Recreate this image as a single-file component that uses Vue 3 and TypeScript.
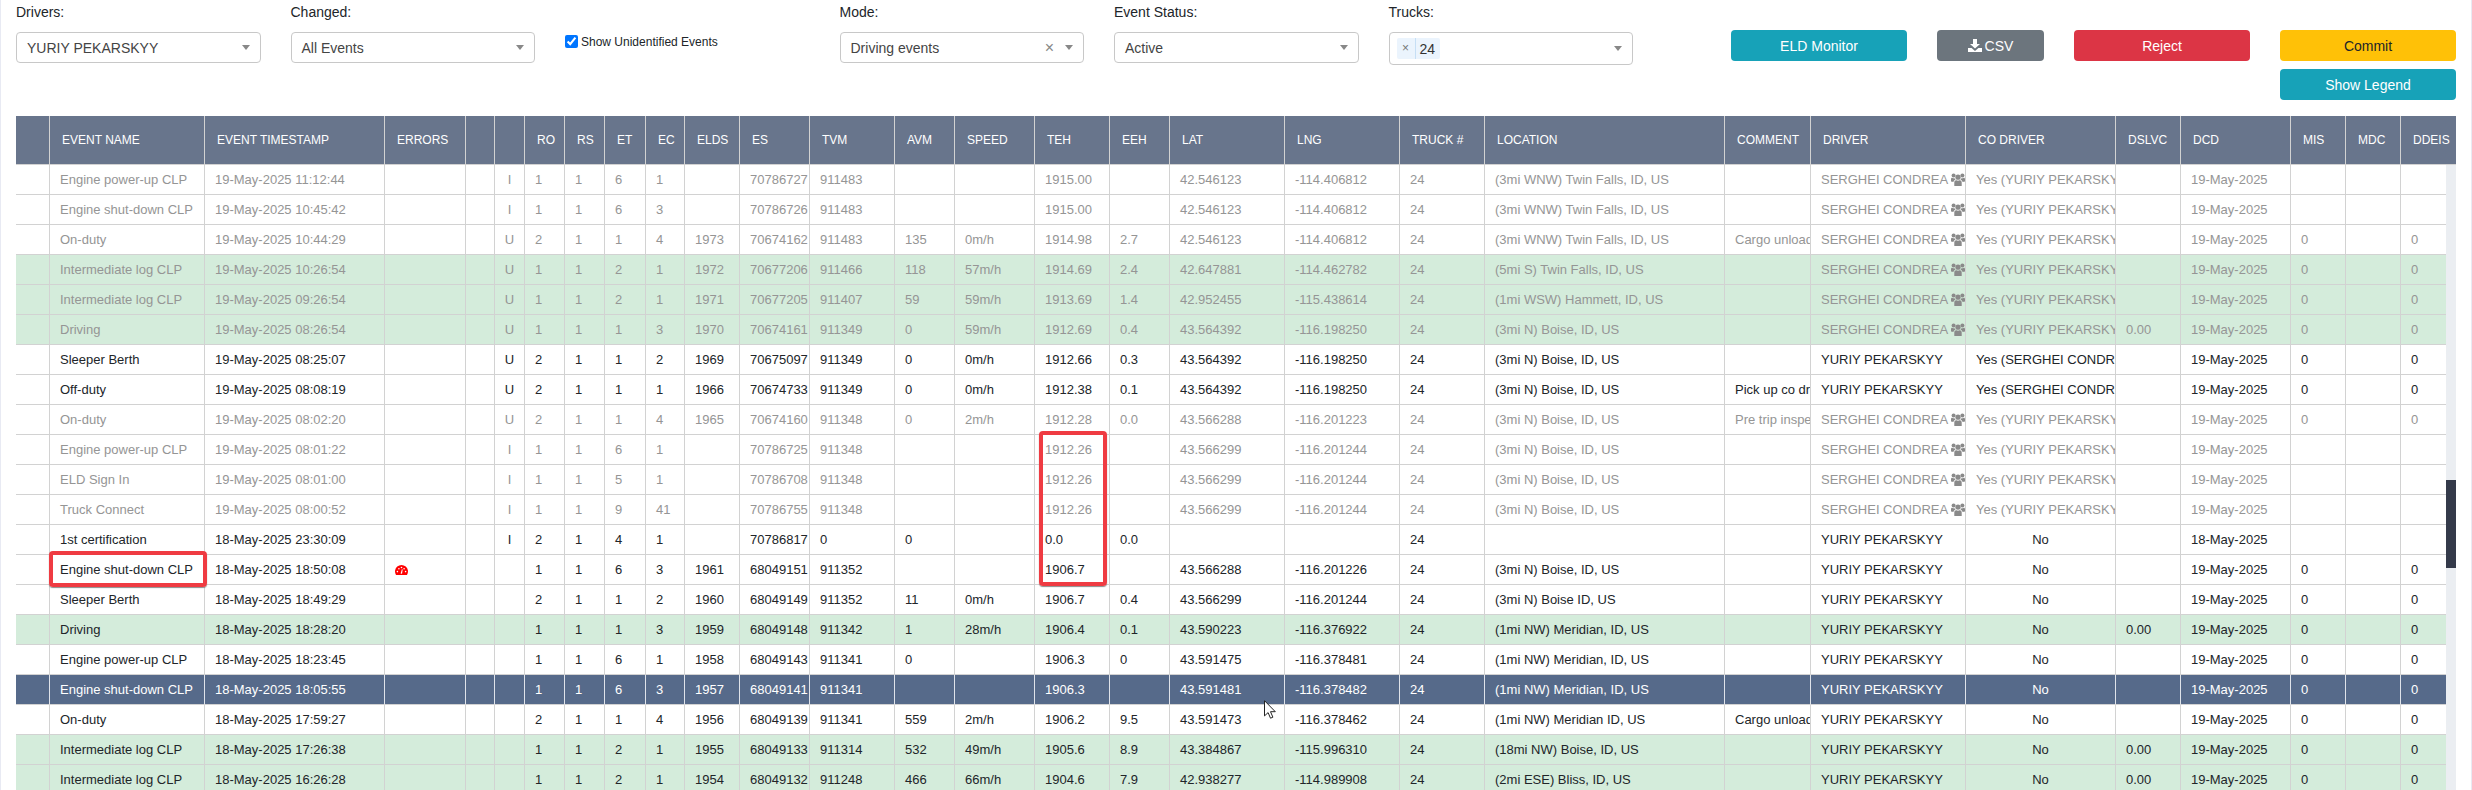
<script setup lang="ts">
interface Row {
  kind: string
  cells: string[]
}

const SERGHEI = 'SERGHEI CONDREA'
const YURIY = 'YURIY PEKARSKYY'
const CO_Y = 'Yes (YURIY PEKARSKYY)'
const CO_S = 'Yes (SERGHEI CONDREA)'
const D19 = '19-May-2025'
const BOISE = '(3mi N) Boise, ID, US'
const TWIN = '(3mi WNW) Twin Falls, ID, US'
const MER = '(1mi NW) Meridian, ID, US'

const bodyWidths: number[] = [34, 155, 180, 81, 29, 30, 40, 40, 41, 39, 55, 70, 85, 60, 80, 75, 60, 115, 115, 85, 240, 86, 155, 150, 65, 110, 55, 55, 45]
const headWidths: number[] = [...bodyWidths.slice(0, -1), 55]

const headers: string[] = ['', 'EVENT NAME', 'EVENT TIMESTAMP', 'ERRORS', '', '', 'RO', 'RS', 'ET', 'EC', 'ELDS', 'ES', 'TVM', 'AVM', 'SPEED', 'TEH', 'EEH', 'LAT', 'LNG', 'TRUCK #', 'LOCATION', 'COMMENT', 'DRIVER', 'CO DRIVER', 'DSLVC', 'DCD', 'MIS', 'MDC', 'DDEIS']

// name|ts|err|blank|iu|ro|rs|et|ec|elds|es|tvm|avm|speed|teh|eeh|lat|lng|truck|loc|comment|driver|co|dslvc|dcd|mis|mdc|ddeis
const raw: [string, string][] = [
  ['gray', `Engine power-up CLP|19-May-2025 11:12:44|||I|1|1|6|1||70786727|911483|||1915.00||42.546123|-114.406812|24|${TWIN}||${SERGHEI}|${CO_Y}||${D19}|||`],
  ['gray', `Engine shut-down CLP|19-May-2025 10:45:42|||I|1|1|6|3||70786726|911483|||1915.00||42.546123|-114.406812|24|${TWIN}||${SERGHEI}|${CO_Y}||${D19}|||`],
  ['gray', `On-duty|19-May-2025 10:44:29|||U|2|1|1|4|1973|70674162|911483|135|0m/h|1914.98|2.7|42.546123|-114.406812|24|${TWIN}|Cargo unloading|${SERGHEI}|${CO_Y}||${D19}|0||0`],
  ['gray green', `Intermediate log CLP|19-May-2025 10:26:54|||U|1|1|2|1|1972|70677206|911466|118|57m/h|1914.69|2.4|42.647881|-114.462782|24|(5mi S) Twin Falls, ID, US||${SERGHEI}|${CO_Y}||${D19}|0||0`],
  ['gray green', `Intermediate log CLP|19-May-2025 09:26:54|||U|1|1|2|1|1971|70677205|911407|59|59m/h|1913.69|1.4|42.952455|-115.438614|24|(1mi WSW) Hammett, ID, US||${SERGHEI}|${CO_Y}||${D19}|0||0`],
  ['gray green', `Driving|19-May-2025 08:26:54|||U|1|1|1|3|1970|70674161|911349|0|59m/h|1912.69|0.4|43.564392|-116.198250|24|${BOISE}||${SERGHEI}|${CO_Y}|0.00|${D19}|0||0`],
  ['', `Sleeper Berth|19-May-2025 08:25:07|||U|2|1|1|2|1969|70675097|911349|0|0m/h|1912.66|0.3|43.564392|-116.198250|24|${BOISE}||${YURIY}|${CO_S}||${D19}|0||0`],
  ['', `Off-duty|19-May-2025 08:08:19|||U|2|1|1|1|1966|70674733|911349|0|0m/h|1912.38|0.1|43.564392|-116.198250|24|${BOISE}|Pick up co driver|${YURIY}|${CO_S}||${D19}|0||0`],
  ['gray', `On-duty|19-May-2025 08:02:20|||U|2|1|1|4|1965|70674160|911348|0|2m/h|1912.28|0.0|43.566288|-116.201223|24|${BOISE}|Pre trip inspection|${SERGHEI}|${CO_Y}||${D19}|0||0`],
  ['gray', `Engine power-up CLP|19-May-2025 08:01:22|||I|1|1|6|1||70786725|911348|||1912.26||43.566299|-116.201244|24|${BOISE}||${SERGHEI}|${CO_Y}||${D19}|||`],
  ['gray', `ELD Sign In|19-May-2025 08:01:00|||I|1|1|5|1||70786708|911348|||1912.26||43.566299|-116.201244|24|${BOISE}||${SERGHEI}|${CO_Y}||${D19}|||`],
  ['gray', `Truck Connect|19-May-2025 08:00:52|||I|1|1|9|41||70786755|911348|||1912.26||43.566299|-116.201244|24|${BOISE}||${SERGHEI}|${CO_Y}||${D19}|||`],
  ['', `1st certification|18-May-2025 23:30:09|||I|2|1|4|1||70786817|0|0||0.0|0.0|||24|||${YURIY}|No||18-May-2025|||`],
  ['', `Engine shut-down CLP|18-May-2025 18:50:08|!|||1|1|6|3|1961|68049151|911352|||1906.7||43.566288|-116.201226|24|${BOISE}||${YURIY}|No||${D19}|0||0`],
  ['', `Sleeper Berth|18-May-2025 18:49:29||||2|1|1|2|1960|68049149|911352|11|0m/h|1906.7|0.4|43.566299|-116.201244|24|(3mi N) Boise ID, US||${YURIY}|No||${D19}|0||0`],
  ['green', `Driving|18-May-2025 18:28:20||||1|1|1|3|1959|68049148|911342|1|28m/h|1906.4|0.1|43.590223|-116.376922|24|${MER}||${YURIY}|No|0.00|${D19}|0||0`],
  ['', `Engine power-up CLP|18-May-2025 18:23:45||||1|1|6|1|1958|68049143|911341|0||1906.3|0|43.591475|-116.378481|24|${MER}||${YURIY}|No||${D19}|0||0`],
  ['selected', `Engine shut-down CLP|18-May-2025 18:05:55||||1|1|6|3|1957|68049141|911341|||1906.3||43.591481|-116.378482|24|${MER}||${YURIY}|No||${D19}|0||0`],
  ['', `On-duty|18-May-2025 17:59:27||||2|1|1|4|1956|68049139|911341|559|2m/h|1906.2|9.5|43.591473|-116.378462|24|(1mi NW) Meridian ID, US|Cargo unloading|${YURIY}|No||${D19}|0||0`],
  ['green', `Intermediate log CLP|18-May-2025 17:26:38||||1|1|2|1|1955|68049133|911314|532|49m/h|1905.6|8.9|43.384867|-115.996310|24|(18mi NW) Boise, ID, US||${YURIY}|No|0.00|${D19}|0||0`],
  ['green', `Intermediate log CLP|18-May-2025 16:26:28||||1|1|2|1|1954|68049132|911248|466|66m/h|1904.6|7.9|42.938277|-114.989908|24|(2mi ESE) Bliss, ID, US||${YURIY}|No|0.00|${D19}|0||0`],
]

const rows: Row[] = raw.map(([kind, line]) => ({ kind, cells: ['', ...line.split('|')] }))

function cellClass(index: number, value: string): string {
  if (index === 5) return 'center'
  if (index === 23 && value === 'No') return 'center'
  return ''
}
</script>

<template>
  <div class="page">
    <header class="toolbar">
      <div class="filters">
        <div class="field">
          <label class="label">Drivers:</label>
          <div class="select"><span class="value">YURIY PEKARSKYY</span><i class="arrow"></i></div>
        </div>
        <div class="field">
          <label class="label">Changed:</label>
          <div class="select"><span class="value">All Events</span><i class="arrow"></i></div>
        </div>
        <label class="check">
          <input type="checkbox" checked />
          <span>Show Unidentified Events</span>
        </label>
        <div class="field">
          <label class="label">Mode:</label>
          <div class="select">
            <span class="value">Driving events</span>
            <span class="clear">×</span>
            <i class="arrow"></i>
          </div>
        </div>
        <div class="field">
          <label class="label">Event Status:</label>
          <div class="select"><span class="value">Active</span><i class="arrow"></i></div>
        </div>
        <div class="field">
          <label class="label">Trucks:</label>
          <div class="select multi">
            <span class="tag"><span class="tag-x">×</span><span class="tag-text">24</span></span>
            <i class="arrow"></i>
          </div>
        </div>
      </div>
      <div class="actions">
        <button class="btn info">ELD Monitor</button>
        <button class="btn secondary csv">
          <svg class="dl" viewBox="0 0 14 13" width="14" height="13">
            <path fill="#fff" d="M5 0h4v5h3L7 9.6 2 5h3zM0 9h3.6L7 12l3.4-3H14v4H0z" />
          </svg>
          CSV
        </button>
        <button class="btn danger">Reject</button>
        <div class="stack">
          <button class="btn warning">Commit</button>
          <button class="btn info">Show Legend</button>
        </div>
      </div>
    </header>

    <section class="grid">
      <table class="head">
        <colgroup><col v-for="(w, i) in headWidths" :key="i" :style="{ width: w + 'px' }" /></colgroup>
        <thead>
          <tr><th v-for="(h, i) in headers" :key="i">{{ h }}</th></tr>
        </thead>
      </table>
      <div class="scroller">
        <table class="body">
          <colgroup><col v-for="(w, i) in bodyWidths" :key="i" :style="{ width: w + 'px' }" /></colgroup>
          <tbody>
            <tr v-for="(row, r) in rows" :key="r" :class="row.kind">
              <td v-for="(cell, c) in row.cells" :key="c" :class="cellClass(c, cell)">
                <svg v-if="cell === '!'" class="gauge" viewBox="0 0 13 10" width="13" height="10">
                  <path fill="#f00" d="M1 10A6.5 6.5 0 1 1 12 10Z" />
                  <g fill="#fff">
                    <circle cx="2.4" cy="6.6" r=".8" />
                    <circle cx="3.9" cy="3.7" r=".8" />
                    <circle cx="6.5" cy="2.5" r=".8" />
                    <circle cx="9.1" cy="3.7" r=".8" />
                    <circle cx="10.6" cy="6.6" r=".8" />
                    <path d="M5.6 8.6 6.9 4.2l.8.2-.7 4.4z" />
                  </g>
                </svg>
                <template v-else>{{ cell }}</template>
                <svg v-if="cell === SERGHEI" class="users" viewBox="0 0 14 13" width="14" height="13">
                  <g fill="#8a8a8a">
                    <circle cx="7" cy="4.2" r="2.6" />
                    <circle cx="2.6" cy="2.6" r="2" />
                    <circle cx="11.4" cy="2.6" r="2" />
                    <path d="M3.3 13V9.6C3.3 7.8 4.6 7 5.4 7.2 6.4 7.8 7.6 7.8 8.6 7.2 9.4 7 10.7 7.8 10.7 9.6V13Z" />
                    <path d="M0 8.6V6.2C0 5 1 4.6 1.6 4.9 2.2 5.3 2.9 5.3 3.6 5.2 3.9 6 4.2 6.4 4.7 6.8 3.4 7.2 2.6 7.9 2.4 9Z" />
                    <path d="M14 8.6V6.2C14 5 13 4.6 12.4 4.9 11.8 5.3 11.1 5.3 10.4 5.2 10.1 6 9.8 6.4 9.3 6.8 10.6 7.2 11.4 7.9 11.6 9Z" />
                  </g>
                </svg>
              </td>
            </tr>
          </tbody>
        </table>
        <div class="track"><div class="thumb"></div></div>
      </div>
      <div class="mark mark-name"></div>
      <div class="mark mark-teh"></div>
      <svg class="cursor" viewBox="0 0 12 19" width="12" height="19">
        <path fill="#fff" stroke="#222" stroke-width="1" d="M.5.7v15.2l3.6-3.3 2.4 5.6 2.4-1-2.4-5.5h4.8z" />
      </svg>
    </section>
  </div>
</template>

<style scoped>
.page {
  position: relative;
  width: 2472px;
  height: 790px;
  box-sizing: border-box;
  overflow: hidden;
  padding: 0 15px;
  border-left: 1px solid #e8eaf3;
  border-right: 1px solid #e8eaf3;
  background: #fff;
  color: #212529;
  font-family: "Liberation Sans", Arial, sans-serif;
  font-size: 14px;
}
.toolbar {
  display: flex;
  justify-content: space-between;
  height: 116px;
  width: 2440px;
}
.filters {
  display: grid;
  grid-template-columns: repeat(6, 244.5px);
  column-gap: 30px;
  align-items: start;
}
.label {
  display: block;
  margin: 2px 0 9px;
  line-height: 21px;
}
.select {
  display: flex;
  align-items: center;
  box-sizing: border-box;
  height: 31px;
  padding: 0 10px;
  border: 1px solid #c8c8c8;
  border-radius: 4px;
  color: #444;
}
.select.multi {
  height: 33px;
  padding-left: 7px;
}
.value {
  flex: 1;
}
.arrow {
  display: block;
  margin-left: auto;
  width: 0;
  height: 0;
  border-left: 4px solid transparent;
  border-right: 4px solid transparent;
  border-top: 5px solid #888;
}
.clear {
  margin-right: 11px;
  color: #888;
  font-size: 16px;
}
.tag {
  display: flex;
  align-items: center;
  height: 21px;
  background: #ebf4fd;
  border-radius: 2px;
}
.tag-x {
  width: 18px;
  line-height: 21px;
  text-align: center;
  font-size: 12px;
  color: #777;
  border-right: 1px solid #c6dff5;
}
.tag-text {
  padding: 0 5px 0 4px;
  color: #333;
}
.check {
  display: flex;
  align-items: center;
  gap: 3px;
  margin-top: 35px;
  height: 13px;
  font-size: 12px;
}
.check input {
  margin: 0;
  width: 13px;
  height: 13px;
}
.actions {
  display: flex;
  align-items: flex-start;
  gap: 30px;
  padding-top: 30px;
}
.stack {
  display: flex;
  flex-direction: column;
  gap: 8px;
}
.btn {
  width: 176px;
  height: 31px;
  padding: 0;
  border: 0;
  border-radius: 4px;
  color: #fff;
  font: 14px "Liberation Sans", Arial, sans-serif;
}
.csv {
  width: 107px;
  display: flex;
  align-items: center;
  justify-content: center;
  gap: 3px;
}
.info { background: #17a2b8; }
.secondary { background: #6c757d; }
.danger { background: #dc3545; }
.warning { background: #ffc107; color: #212529; }

.grid {
  position: relative;
  width: 2440px;
}
table {
  table-layout: fixed;
  border-collapse: separate;
  border-spacing: 0;
}
.head {
  width: 2440px;
}
.head th {
  box-sizing: border-box;
  height: 49px;
  padding: 0 0 0 12px;
  overflow: hidden;
  background: #68758c;
  background-clip: padding-box;
  color: #fff;
  font-size: 12px;
  font-weight: 400;
  text-align: left;
  white-space: nowrap;
  border-right: 1px solid #d2d2d2;
  border-bottom: 1px solid #d2d2d2;
}
.head th:last-child {
  border-right: 0;
}
.scroller {
  display: flex;
  align-items: flex-start;
}
.body {
  width: 2430px;
  flex: none;
}
.body td {
  box-sizing: border-box;
  height: 30px;
  padding: 0 10px;
  overflow: hidden;
  font-size: 13px;
  white-space: nowrap;
  border-right: 1px solid #d2d2d2;
  border-bottom: 1px solid #d2d2d2;
}
.body td:last-child {
  border-right: 0;
}
.body td.center {
  padding: 0;
  text-align: center;
}
.green td {
  background: #d4ecdb;
}
.gray td {
  color: #959595;
}
.selected td {
  background: #566a8a;
  color: #fff;
  border-right-color: #dfe3ea;
}
.gauge {
  display: inline-block;
  vertical-align: -1px;
}
.users {
  display: inline-block;
  vertical-align: -2px;
  margin-left: 3px;
}
.track {
  width: 10px;
  height: 625px;
  flex: none;
  background: #ebeef2;
}
.thumb {
  width: 10px;
  height: 88px;
  margin-top: 315px;
  background: #343a4a;
}
.mark {
  position: absolute;
  box-sizing: border-box;
  border: 4px solid #ef3b42;
  border-radius: 4px;
  box-shadow: 0 1px 1px rgba(90, 90, 90, 0.7);
}
.mark-name {
  left: 33px;
  top: 435px;
  width: 158px;
  height: 36px;
}
.mark-teh {
  left: 1023px;
  top: 315px;
  width: 68px;
  height: 155px;
}
.cursor {
  position: absolute;
  left: 1248px;
  top: 584px;
}
</style>
